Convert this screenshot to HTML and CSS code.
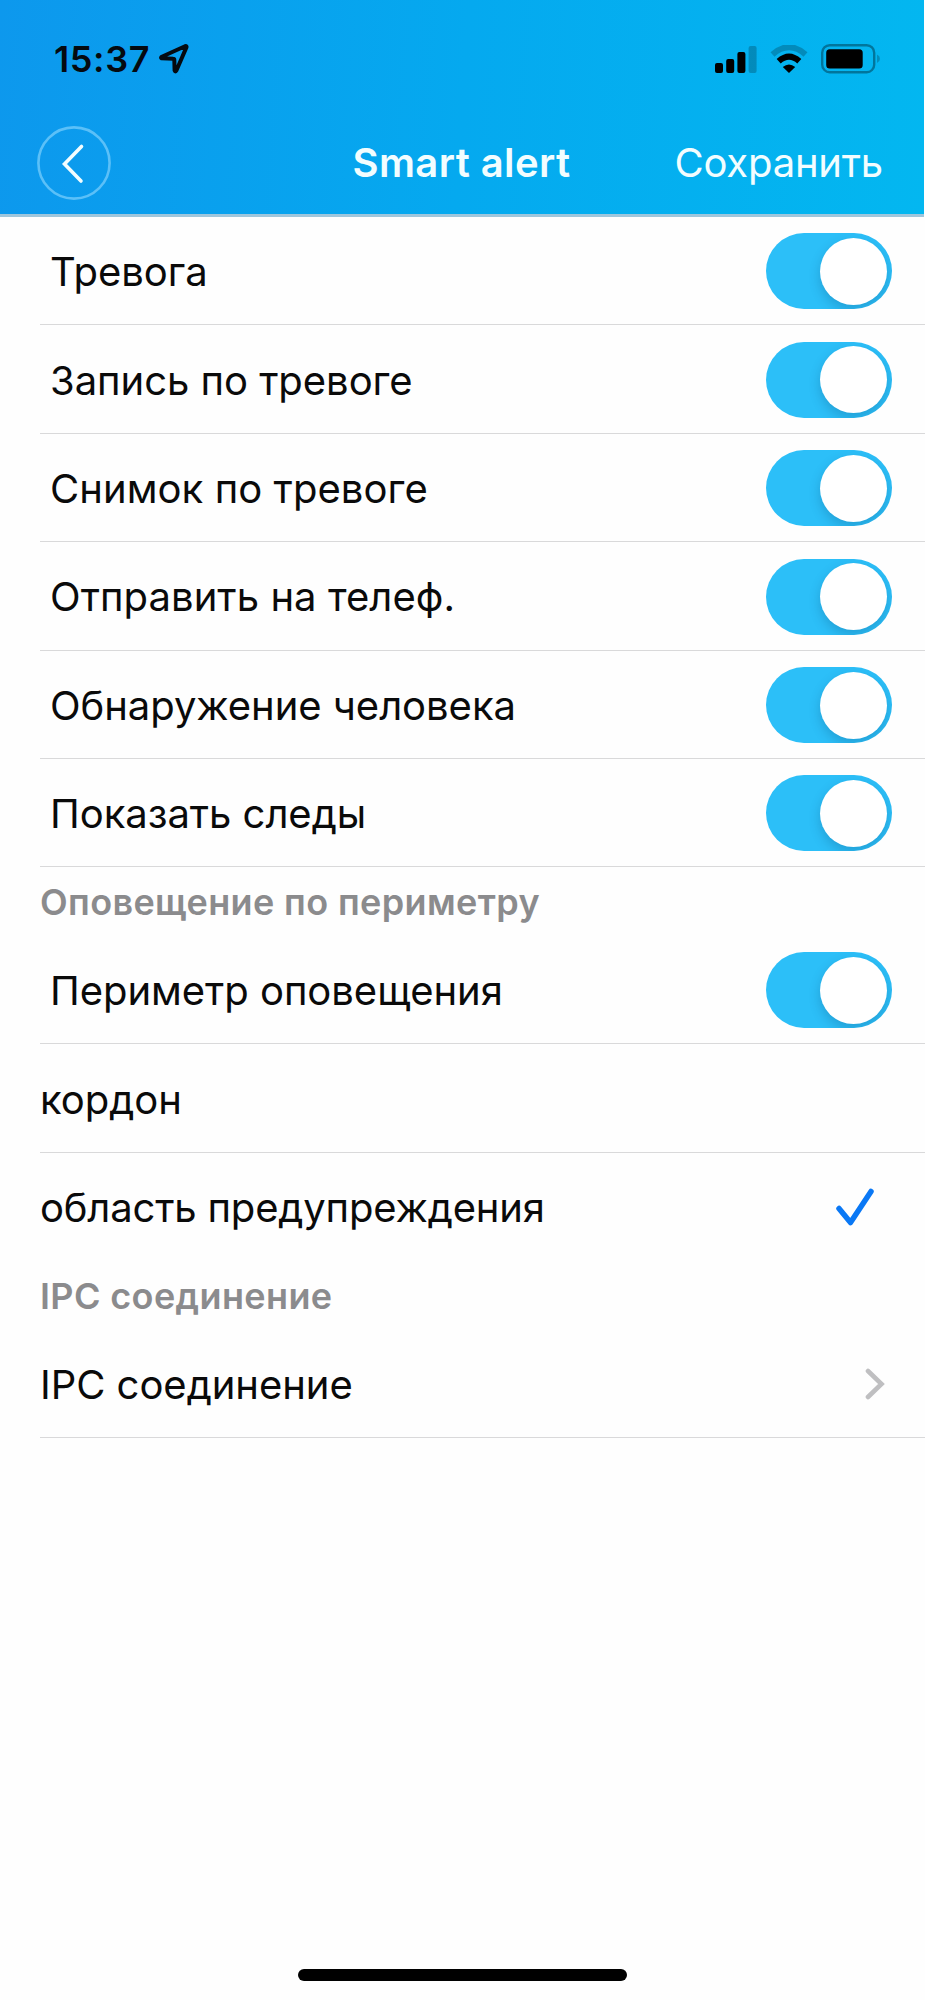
FILE: index.html
```html
<!DOCTYPE html>
<html lang="ru">
<head>
<meta charset="utf-8">
<title>Smart alert</title>
<link rel="stylesheet" href="styles.css">
</head>
<body>
<div class="screen">
  <header class="header">
    <div class="status">
      <span class="time">15:37</span>
      <svg class="location" width="30" height="30" viewBox="0 0 30 30"><path d="M2.500 14.200 Q1.500 13.600 2.800 12.800L26 2.200Q28 1.600 27.400 3.400L17.400 26.500Q16.200 28.400 15.600 26.500L15.300 15.800Q15.200 14.800 14.200 14.800Z"/></svg>
      <div class="indicators">
        <svg class="signal" width="42" height="28" viewBox="0 0 42 28"><rect x="0" y="18" width="8" height="10" rx="2"/><rect x="11.2" y="14" width="8" height="14" rx="2"/><rect x="22.4" y="7" width="8" height="21" rx="2"/><rect class="faded" x="33.6" y="1" width="8" height="27" rx="2"/></svg>
        <svg class="wifi" width="38" height="28" viewBox="0 0 38 28"><path class="arc faded" d="M2.500 9.500Q19-5 35.500 9.500"/><path class="arc" d="M8.700 16.300Q19 7 29.300 16.300"/><path d="M12.800 22Q19 17 25.200 22L19 28Z"/></svg>
        <svg class="battery" width="60" height="30" viewBox="0 0 60 30"><rect class="shell" x="1.2" y="1.2" width="52" height="27" rx="7.5"/><rect x="5.2" y="5.2" width="36.5" height="19.4" rx="3.5"/><path class="faded" d="M56 10.500q3 1.500 3 4.200t-3 4.200z"/></svg>
      </div>
    </div>
    <nav class="navbar">
      <svg class="back" width="74" height="74" viewBox="0 0 74 74"><circle cx="37" cy="37" r="35.600"/><path d="M44.500 20.500 27.500 38 44 55"/></svg>
      <h1 class="title">Smart alert</h1>
      <span class="save">Сохранить</span>
    </nav>
  </header>
  <main class="list">
    <div class="row indent"><span class="label">Тревога</span><span class="toggle"></span></div>
    <div class="row indent"><span class="label">Запись по тревоге</span><span class="toggle"></span></div>
    <div class="row indent"><span class="label looser">Снимок по тревоге</span><span class="toggle"></span></div>
    <div class="row indent"><span class="label looser">Отправить на телеф.</span><span class="toggle"></span></div>
    <div class="row indent"><span class="label">Обнаружение человека</span><span class="toggle"></span></div>
    <div class="row indent"><span class="label">Показать следы</span><span class="toggle"></span></div>
    <h2 class="section"><span>Оповещение по периметру</span></h2>
    <div class="row indent"><span class="label">Периметр оповещения</span><span class="toggle"></span></div>
    <div class="row"><span class="label">кордон</span></div>
    <div class="row last"><span class="label tighter">область предупреждения</span><svg class="check" width="40" height="40" viewBox="0 0 40 40"><path d="M4 21.500 15.500 35.500 36 4.500"/></svg></div>
    <h2 class="section"><span>IPC соединение</span></h2>
    <div class="row"><span class="label">IPC соединение</span><svg class="chevron" width="20" height="32" viewBox="0 0 20 32"><path d="M3 3 16.500 16 3 29"/></svg></div>
  </main>
  <div class="home"></div>
</div>
</body>
</html>
```
FILE: styles.css
```css
body { margin: 0; background: #fff; }
.screen {
  display: flex; flex-direction: column; box-sizing: border-box;
  width: 925px; height: 2000px; overflow: hidden;
  background: #fefefe; color: #0a0a0a;
  font-family: Inter, "Liberation Sans", sans-serif; font-size: 40px;
}
.header {
  box-sizing: border-box; height: 217px; flex: none; margin-right: 1px;
  border-bottom: 3px solid #9fc6dc;
  background: linear-gradient(94deg, #0d98ed 0%, #05a9ef 50%, #03b7f0 100%);
}
.status { display: flex; align-items: center; height: 118px; padding: 0 43px 0 54px; color: #050a10; }
.time { font-size: 36px; font-weight: 600; letter-spacing: .6px; }
.location { margin-left: 9px; fill: none; stroke: #050a10; stroke-width: 4; stroke-linejoin: round; }
.indicators { display: flex; align-items: center; gap: 13px; margin-left: auto; }
.faded { opacity: .22; }
.arc { fill: none; stroke: #000; stroke-width: 6; }
.shell { fill: none; stroke: #000; stroke-opacity: .35; stroke-width: 2.4; }
.navbar { display: grid; grid-template-columns: 1fr auto 1fr; align-items: center; height: 89px; padding: 0 41px 0 37px; color: #f2fdff; }
.back { fill: none; stroke: #f2fdff; stroke-width: 3.6; stroke-linecap: round; }
.back circle { stroke: #5bc0f8; stroke-width: 2.6; }
.title { margin: 0; padding: 0 0 1px 3px; font-size: 40px; font-weight: 600; letter-spacing: .4px; }
.save { justify-self: end; padding-bottom: 1px; letter-spacing: -.2px; }
.list { flex: 1; }
.row {
  display: flex; align-items: center; justify-content: space-between; box-sizing: border-box;
  height: 108.4px; margin-left: 40px; padding-right: 33px; border-bottom: 1px solid #d9d9da;
}
.row.last { border-bottom-color: transparent; }
.indent { padding-left: 10px; }
.label { padding-top: 2px; letter-spacing: -.04px; }
.looser { letter-spacing: .06px; }
.tighter { letter-spacing: -.17px; }
.toggle {
  display: flex; align-items: center; justify-content: flex-end; box-sizing: border-box; margin-top: 1.6px;
  width: 126px; height: 76px; padding-right: 5px; border-radius: 38px; background: #2cbff8; overflow: hidden;
}
.toggle::after { content: ""; width: 67px; height: 67px; border-radius: 50%; background: #fff; box-shadow: 0 5px 12px rgba(0, 50, 90, .22); }
.section { display: flex; align-items: center; height: 68.600px; margin: 0 0 0 40px; font-size: 36px; font-weight: 600; letter-spacing: .37px; color: #8b8b8d; }
.section span { padding-top: 1px; }
.check { margin: 2px 17px 0 0; fill: none; stroke: #0a78f5; stroke-width: 5.500; stroke-linecap: round; stroke-linejoin: round; }
.chevron { margin: 2px 7px 0 0; fill: none; stroke: #bfbfc1; stroke-width: 4.6; stroke-linecap: round; }
.home { flex: none; width: 329px; height: 12px; margin: 0 auto 19px; border-radius: 6px; background: #000; }
```
